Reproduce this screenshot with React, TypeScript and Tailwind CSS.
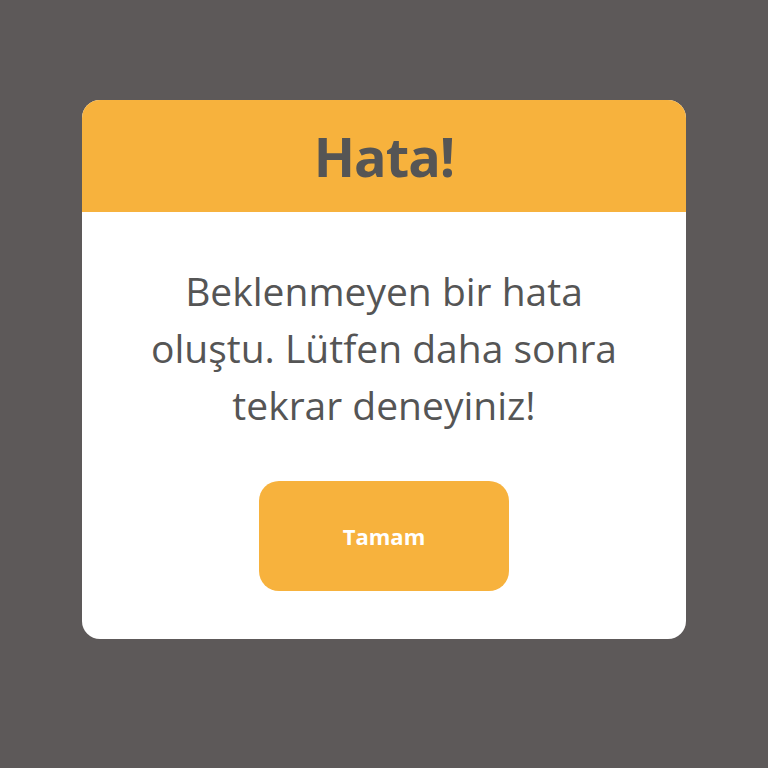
export default function App() {
	return (
		<div className="flex h-[768px] w-[768px] items-start justify-center bg-[#5d5959] pt-[100px] font-['Open_Sans',sans-serif]">
			<div className="flex w-[604px] flex-col overflow-hidden rounded-[18px] bg-white">
				<div className="flex h-[112px] items-center justify-center bg-[#f7b23d]">
					<h1 className="text-[54px] font-bold tracking-[-1px] text-[#555555]">Hata!</h1>
				</div>
				<div className="flex flex-col items-center pb-[48px] pt-[50px]">
					<p className="text-center text-[39px] leading-[57px] text-[#555555]">
						Beklenmeyen bir hata
						<br />
						oluştu. Lütfen daha sonra
						<br />
						tekrar deneyiniz!
					</p>
					<button className="mt-[48px] h-[110px] w-[250px] rounded-[20px] bg-[#f7b23d] text-[22px] font-bold text-white">
						Tamam
					</button>
				</div>
			</div>
		</div>
	);
}
